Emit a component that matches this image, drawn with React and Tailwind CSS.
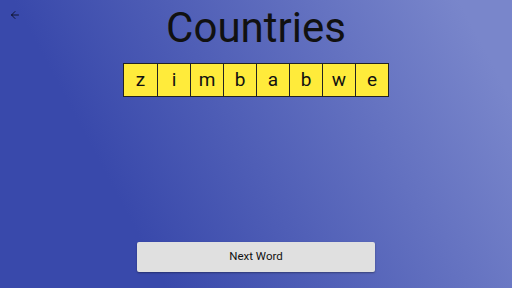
import { ArrowLeft } from 'lucide-react';

const letters = ['z', 'i', 'm', 'b', 'a', 'b', 'w', 'e'];

const App = () => (
  <div className="w-[512px] h-[288px] overflow-hidden flex flex-col items-center bg-[linear-gradient(62deg,#3949ab_25%,#7986cb_92%)] font-['Roboto',sans-serif] relative">
    <button className="absolute left-[9px] top-[9px] text-black">
      <ArrowLeft size={12} strokeWidth={1.4} />
    </button>

    <h1 className="mt-[3px] h-[50px] leading-[50px] text-[42px] text-[#111] font-normal">Countries</h1>

    <div className="mt-[10px] flex border border-[#222]">
      {letters.map((l, i) => (
        <div
          key={i}
          className={`w-[33px] h-[32px] flex items-center justify-center bg-[#ffeb3b] text-[19px] text-[#111] ${i > 0 ? 'border-l border-[#222]' : ''}`}
        >
          {l}
        </div>
      ))}
    </div>

    <div className="flex-1" />

    <button className="mb-[16px] w-[238px] h-[30px] rounded-[2px] bg-[#e0e0e0] shadow-[0_1px_2px_rgba(0,0,0,0.35)] text-[11.5px] text-[#111]">
      Next Word
    </button>
  </div>
);

export default App;
